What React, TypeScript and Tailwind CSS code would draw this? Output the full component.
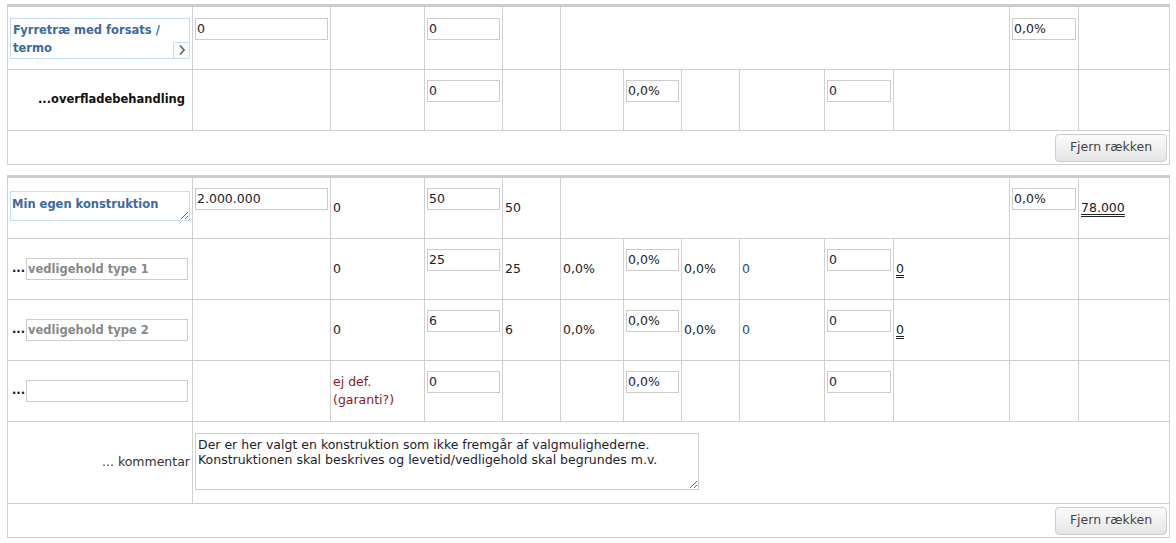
import type { FC, ReactNode } from "react";

// column widths, left to right (13 columns, 7px → 1169px)
const COLS = [
  "w-[185px]",
  "w-[138px]",
  "w-[94px]",
  "w-[78px]",
  "w-[58px]",
  "w-[63px]",
  "w-[58px]",
  "w-[58px]",
  "w-[85px]",
  "w-[69px]",
  "w-[116px]",
  "w-[69px]",
  "w-[91px]",
];

const Cols: FC = () => (
  <colgroup>
    {COLS.map((c, i) => (
      <col key={i} className={c} />
    ))}
  </colgroup>
);

const Td: FC<{ children?: ReactNode; span?: number; className?: string }> = ({
  children,
  span,
  className = "",
}) => (
  <td colSpan={span} className={`border border-[#cfcfcf] p-[2px] align-middle ${className}`}>
    {children}
  </td>
);

const InCell: FC<{ v: string }> = ({ v }) => (
  <Td>
    <div className="pb-[19px]">
      <input
        readOnly
        value={v}
        className="block h-[22px] w-full border border-[#cccccc] bg-white px-[1px] text-[12.5px] text-[#1d1d2b] outline-none"
      />
    </div>
  </Td>
);

const Num: FC<{ children: ReactNode; className?: string }> = ({ children, className = "text-[#222]" }) => (
  <Td className={`text-[12.5px] ${className}`}>{children}</Td>
);

const Sum: FC<{ children: ReactNode }> = ({ children }) => (
  <Td className="text-[12.5px] text-[#222]">
    <span className="underline decoration-double decoration-1 underline-offset-[2px]">{children}</span>
  </Td>
);

const SubLabel: FC<{ v: string }> = ({ v }) => (
  <Td>
    <div className="flex items-center justify-end pr-[2px]">
      <span className="mr-[1px] text-[11.5px] font-bold text-[#101040]">...</span>
      <input
        readOnly
        value={v}
        className="block h-[22px] w-[162px] border border-[#cccccc] bg-white px-[1px] text-[11.5px] font-bold text-[#888888] outline-none"
      />
    </div>
  </Td>
);

const RemoveRow: FC = () => (
  <tr className="h-[34px]">
    <Td span={13} className="text-right">
      <button className="h-[28px] w-[112px] rounded-[4px] border border-[#cccccc] bg-linear-to-b from-[#fbfbfb] to-[#e5e5e5] text-[12.5px] text-[#444]">
        Fjern rækken
      </button>
    </Td>
  </tr>
);

const Empty: FC<{ n: number }> = ({ n }) => (
  <>
    {Array.from({ length: n }).map((_, i) => (
      <Td key={i} />
    ))}
  </>
);

const TABLE = "w-[1163px] table-fixed border-collapse border-t-[3px] border-t-[#cccccc]";

export default function App() {
  return (
    <div className="min-h-[543px] bg-white pl-[7px] pt-[4px] font-['DejaVu_Sans',sans-serif] text-[#222]">
      {/* Fyrretræ row */}
      <table className={TABLE}>
        <Cols />
        <tbody>
          <tr className="h-[64px]">
            <Td>
              <div className="relative h-[41px] w-full border border-[#c6def2] px-[2px] pt-[2px] text-[11.5px] font-bold leading-[18px] text-[#3d6a9e]">
                Fyrretræ med forsats /<br />
                termo
                <span className="absolute bottom-0 right-0 flex h-[16px] w-[16px] items-center justify-center border-l border-t border-[#c6def2] bg-[#fafafa]">
                  <svg width="8" height="12" viewBox="0 0 8 12">
                    <path d="M2 1.5 L6 6 L2 10.5" fill="none" stroke="#666" strokeWidth="1.7" />
                  </svg>
                </span>
              </div>
            </Td>
            <InCell v="0" />
            <Td />
            <InCell v="0" />
            <Td />
            <Td span={6} />
            <InCell v="0,0%" />
            <Td />
          </tr>
          <tr className="h-[61px]">
            <Td className="pr-[7px] text-right text-[11.5px] font-bold text-[#111]">...overfladebehandling</Td>
            <Empty n={2} />
            <InCell v="0" />
            <Empty n={2} />
            <InCell v="0,0%" />
            <Empty n={2} />
            <InCell v="0" />
            <Empty n={3} />
          </tr>
          <RemoveRow />
        </tbody>
      </table>

      {/* own construction */}
      <table className={`${TABLE} mt-[10px]`}>
        <Cols />
        <tbody>
          <tr className="h-[62px]">
            <Td>
              <textarea
                readOnly
                rows={1}
                value="Min egen konstruktion"
                className="mb-[4px] block h-[30px] w-full border border-[#c6def2] px-[1px] pt-[3px] text-[11.5px] font-bold leading-[18px] text-[#3d6a9e] outline-none"
              />
            </Td>
            <InCell v="2.000.000" />
            <Num>0</Num>
            <InCell v="50" />
            <Num>50</Num>
            <Td span={6} />
            <InCell v="0,0%" />
            <Sum>78.000</Sum>
          </tr>
          {[
            ["vedligehold type 1", "25"],
            ["vedligehold type 2", "6"],
          ].map(([label, years]) => (
            <tr key={label} className="h-[61px]">
              <SubLabel v={label} />
              <Td />
              <Num>0</Num>
              <InCell v={years} />
              <Num>{years}</Num>
              <Num>0,0%</Num>
              <InCell v="0,0%" />
              <Num>0,0%</Num>
              <Num className="text-[#1a4a88]">0</Num>
              <InCell v="0" />
              <Sum>0</Sum>
              <Empty n={2} />
            </tr>
          ))}
          <tr className="h-[61px]">
            <SubLabel v="" />
            <Td />
            <Td className="text-[12.5px] leading-[18px] text-[#8b1a2a]">
              ej def.
              <br />
              (garanti?)
            </Td>
            <InCell v="0" />
            <Empty n={2} />
            <InCell v="0,0%" />
            <Empty n={2} />
            <InCell v="0" />
            <Empty n={3} />
          </tr>
          <tr className="h-[82px]">
            <Td className="text-right text-[12.5px] text-[#333]">... kommentar</Td>
            <Td span={12}>
              <textarea
                readOnly
                value={
                  "Der er her valgt en konstruktion som ikke fremgår af valgmulighederne.\nKonstruktionen skal beskrives og levetid/vedligehold skal begrundes m.v."
                }
                className="mb-[3px] block h-[57px] w-[504px] border border-[#cccccc] px-[2px] pt-[3px] text-[12.5px] leading-[15px] text-[#1d1d2b] outline-none"
              />
            </Td>
          </tr>
          <RemoveRow />
        </tbody>
      </table>
    </div>
  );
}
